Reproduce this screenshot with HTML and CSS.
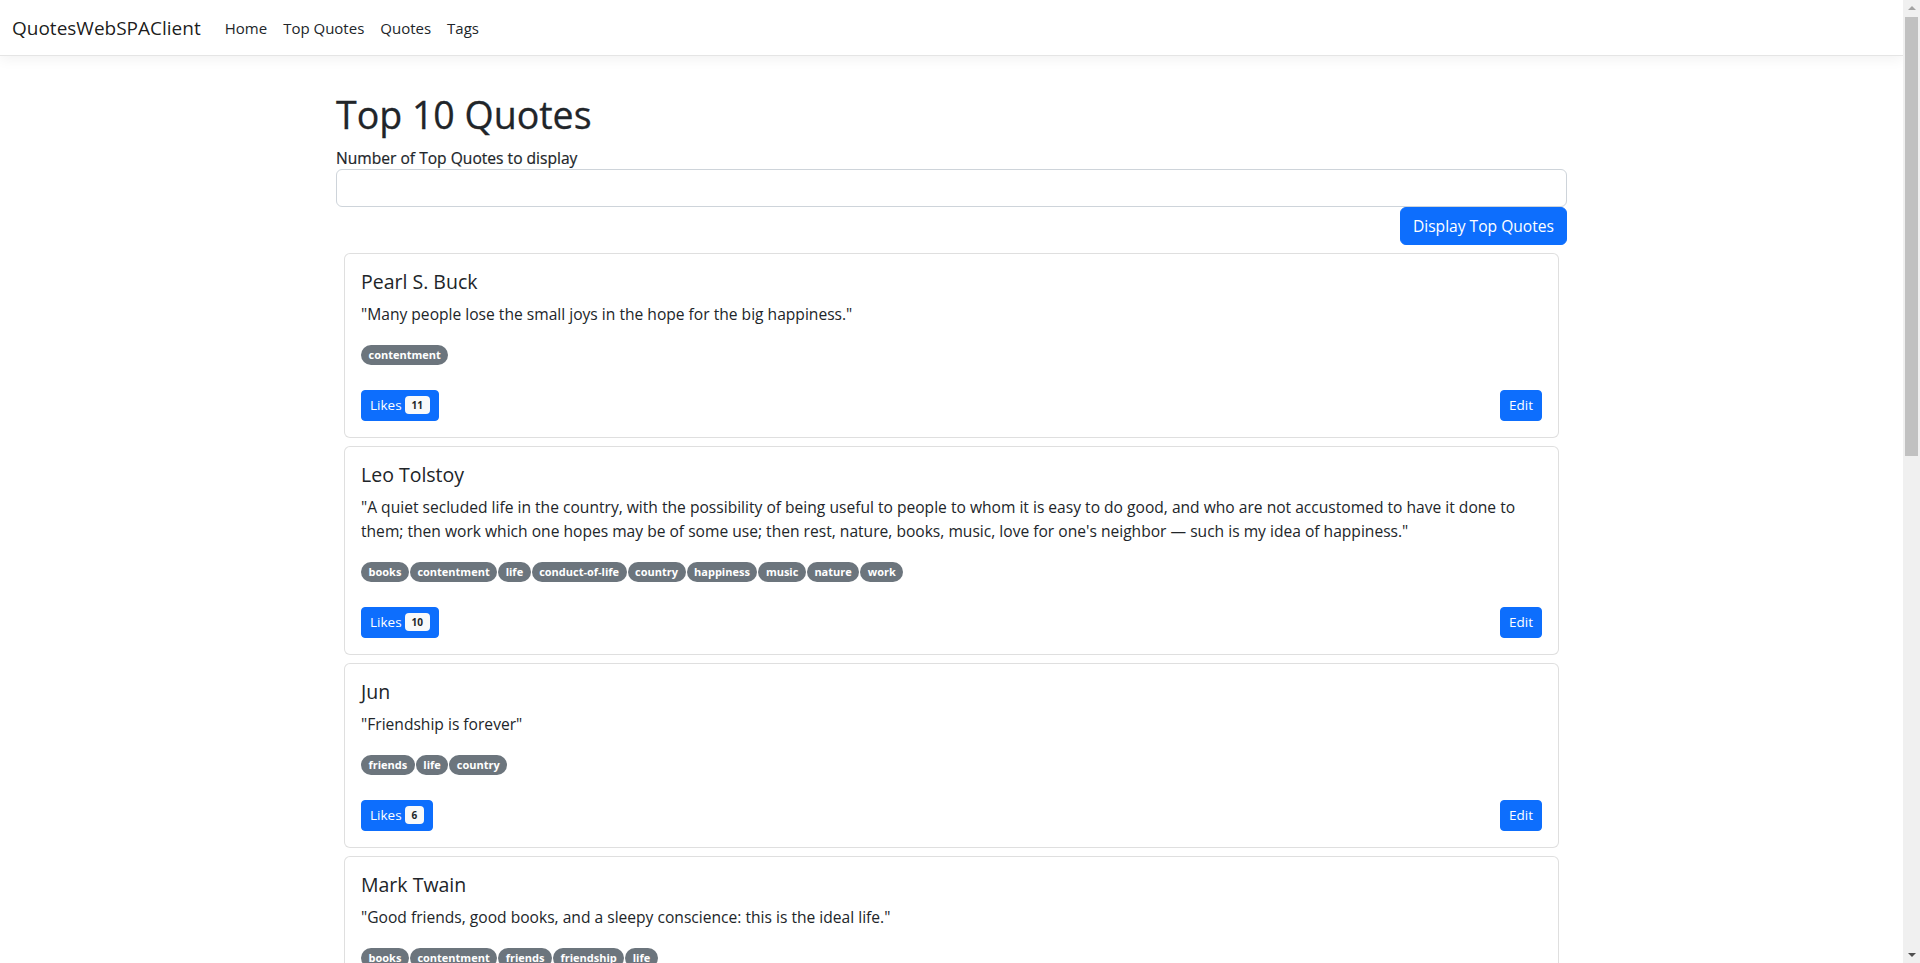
FILE: index.html
```html
<!DOCTYPE html>
<html lang="en">
<head>
<meta charset="utf-8">
<title>QuotesWebSPAClient</title>
<link rel="stylesheet" href="styles.css">
</head>
<body>
<nav class="navbar">
  <a class="brand" href="#">QuotesWebSPAClient</a>
  <ul class="nav-links">
    <li><a href="#">Home</a></li>
    <li><a href="#">Top Quotes</a></li>
    <li><a href="#">Quotes</a></li>
    <li><a href="#">Tags</a></li>
  </ul>
</nav>
<main class="container">
  <h1 class="page-title">Top 10 Quotes</h1>
  <label class="field-label" for="count">Number of Top Quotes to display</label>
  <input class="form-control" id="count" type="text">
  <div class="form-actions">
    <button class="btn btn-primary" type="button">Display Top Quotes</button>
  </div>
  <div class="quote-list">
    <div class="card">
      <div class="card-body">
        <h5 class="card-title">Pearl S. Buck</h5>
        <p class="card-text">"Many people lose the small joys in the hope for the big happiness."</p>
        <div class="tags"><span class="badge">contentment</span></div>
        <div class="card-actions">
          <button class="btn btn-primary btn-sm" type="button">Likes <span class="count">11</span></button>
          <button class="btn btn-primary btn-sm" type="button">Edit</button>
        </div>
      </div>
    </div>
    <div class="card">
      <div class="card-body">
        <h5 class="card-title">Leo Tolstoy</h5>
        <p class="card-text">"A quiet secluded life in the country, with the possibility of being useful to people to whom it is easy to do good, and who are not accustomed to have it done to them; then work which one hopes may be of some use; then rest, nature, books, music, love for one's neighbor — such is my idea of happiness."</p>
        <div class="tags"><span class="badge">books</span><span class="badge">contentment</span><span class="badge">life</span><span class="badge">conduct-of-life</span><span class="badge">country</span><span class="badge">happiness</span><span class="badge">music</span><span class="badge">nature</span><span class="badge">work</span></div>
        <div class="card-actions">
          <button class="btn btn-primary btn-sm" type="button">Likes <span class="count">10</span></button>
          <button class="btn btn-primary btn-sm" type="button">Edit</button>
        </div>
      </div>
    </div>
    <div class="card">
      <div class="card-body">
        <h5 class="card-title">Jun</h5>
        <p class="card-text">"Friendship is forever"</p>
        <div class="tags"><span class="badge">friends</span><span class="badge">life</span><span class="badge">country</span></div>
        <div class="card-actions">
          <button class="btn btn-primary btn-sm" type="button">Likes <span class="count">6</span></button>
          <button class="btn btn-primary btn-sm" type="button">Edit</button>
        </div>
      </div>
    </div>
    <div class="card">
      <div class="card-body">
        <h5 class="card-title">Mark Twain</h5>
        <p class="card-text">"Good friends, good books, and a sleepy conscience: this is the ideal life."</p>
        <div class="tags"><span class="badge">books</span><span class="badge">contentment</span><span class="badge">friends</span><span class="badge">friendship</span><span class="badge">life</span></div>
        <div class="card-actions">
          <button class="btn btn-primary btn-sm" type="button">Likes <span class="count">5</span></button>
          <button class="btn btn-primary btn-sm" type="button">Edit</button>
        </div>
      </div>
    </div>
    <div class="card">
      <div class="card-body">
        <h5 class="card-title">Albert Einstein</h5>
        <p class="card-text">"Life is like riding a bicycle. To keep your balance you must keep moving."</p>
        <div class="tags"><span class="badge">life</span><span class="badge">simile</span></div>
        <div class="card-actions">
          <button class="btn btn-primary btn-sm" type="button">Likes <span class="count">4</span></button>
          <button class="btn btn-primary btn-sm" type="button">Edit</button>
        </div>
      </div>
    </div>
  </div>
</main>
<div class="scrollbar" aria-hidden="true">
  <span class="arrow arrow-up"></span>
  <span class="thumb"></span>
  <span class="arrow arrow-down"></span>
</div>
</body>
</html>
```

FILE: styles.css
```css
* { box-sizing: border-box; }

body {
  margin: 0 17px 0 0;
  font-family: "Segoe UI", "Open Sans", "Noto Sans", sans-serif;
  font-size: 15.6px;
  line-height: 24px;
  color: #212529;
  background: #fff;
}

/* ---------- navbar ---------- */
.navbar {
  display: flex;
  align-items: center;
  height: 56px;
  padding: 0 12px;
  background: #fff;
  border-bottom: 1px solid #e5e5e5;
  box-shadow: 0 4px 12px rgba(0, 0, 0, 0.05);
}

.brand {
  font-size: 19px;
  line-height: 30px;
  color: rgba(0, 0, 0, 0.9);
  text-decoration: none;
  margin-right: 16px;
}

.nav-links {
  display: flex;
  list-style: none;
  margin: 0;
  padding: 0;
}

.nav-links a {
  display: block;
  padding: 8px;
  font-size: 15px;
  color: #212529;
  text-decoration: none;
}

/* ---------- page ---------- */
.container {
  max-width: 1231px;
  margin: 0 auto;
  padding-top: 35px;
}

.page-title {
  margin: 0 0 7px;
  font-size: 37.5px;
  font-weight: 500;
  line-height: 48px;
  -webkit-text-stroke: 0.3px #212529;
}

.field-label {
  display: block;
  margin-bottom: -1px;
  -webkit-text-stroke: 0.2px #212529;
}

.form-control {
  display: block;
  width: 100%;
  height: 38px;
  padding: 6px 12px;
  font: inherit;
  color: #212529;
  border: 1px solid #ced4da;
  border-radius: 6px;
}

.form-actions {
  display: flex;
  justify-content: flex-end;
}

.btn {
  display: inline-block;
  font-family: inherit;
  font-size: 15.6px;
  line-height: 24px;
  padding: 6px 12px;
  border: 1px solid transparent;
  border-radius: 6px;
  cursor: pointer;
}

.btn-primary {
  color: #fff;
  background: #0d6efd;
  border-color: #0d6efd;
}

.btn-sm {
  font-size: 13.5px;
  line-height: 21px;
  padding: 4px 8px;
  border-radius: 4px;
}

/* ---------- quote cards ---------- */
.quote-list {
  display: flex;
  flex-direction: column;
  gap: 8px;
  padding: 8px;
}

.card {
  border: 1px solid rgba(0, 0, 0, 0.125);
  border-radius: 6px;
  background: #fff;
}

.card-body {
  padding: 16px;
}

.card-title {
  margin: 0 0 8px;
  font-size: 19.5px;
  font-weight: 500;
  line-height: 24px;
}

.card-text {
  margin: 0 0 16px;
}

.tags {
  display: flex;
  flex-wrap: wrap;
  align-items: flex-start;
  gap: 1px;
  height: 24px;
  padding-top: 3px;
  margin-bottom: 24px;
}

.badge {
  display: inline-block;
  padding: 4px 7.5px;
  font-size: 11px;
  font-weight: 700;
  line-height: 12px;
  color: #fff;
  background: #6c757d;
  border-radius: 50rem;
  white-space: nowrap;
}

.card-actions {
  display: flex;
  justify-content: space-between;
  align-items: center;
}

.count {
  display: inline-block;
  position: relative;
  top: -1px;
  padding: 3.7px 6.5px;
  font-size: 10px;
  font-weight: 700;
  line-height: 1;
  color: #212529;
  background: #f8f9fa;
  border-radius: 4px;
  vertical-align: baseline;
}

/* ---------- fake window scrollbar ---------- */
.scrollbar {
  position: fixed;
  top: 0;
  right: 0;
  bottom: 0;
  width: 17px;
  background: #f0f0f0;
  display: flex;
  flex-direction: column;
  align-items: center;
}

.thumb {
  width: 13px;
  height: 439px;
  background: #c1c1c1;
}

.arrow {
  display: block;
  width: 0;
  height: 0;
  border-left: 4px solid transparent;
  border-right: 4px solid transparent;
}

.arrow-up {
  margin: 6px 0 7px;
  border-bottom: 4px solid #a3a3a3;
}

.arrow-down {
  margin-top: auto;
  margin-bottom: 6px;
  border-top: 4px solid #505050;
}
```
